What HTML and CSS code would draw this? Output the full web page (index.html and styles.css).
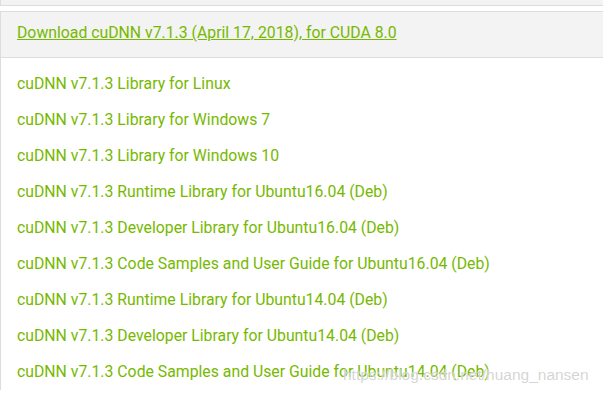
FILE: index.html
```html
<!DOCTYPE html>
<html>
<head>
  <meta charset="utf-8" />
  <title>cuDNN Download</title>
<link rel="stylesheet" href="styles.css">
</head>
<body>
<div class="page">
  <div class="prev_panel"></div>
  <div class="panel">
    <div class="panel_head">
      <a href="#">Download cuDNN v7.1.3 (April 17, 2018), for CUDA 8.0</a>
    </div>
    <div class="panel_body">
      <a href="#">cuDNN v7.1.3 Library for Linux</a>
      <a href="#">cuDNN v7.1.3 Library for Windows 7</a>
      <a href="#">cuDNN v7.1.3 Library for Windows 10</a>
      <a href="#">cuDNN v7.1.3 Runtime Library for Ubuntu16.04 (Deb)</a>
      <a href="#">cuDNN v7.1.3 Developer Library for Ubuntu16.04 (Deb)</a>
      <a href="#">cuDNN v7.1.3 Code Samples and User Guide for Ubuntu16.04 (Deb)</a>
      <a href="#">cuDNN v7.1.3 Runtime Library for Ubuntu14.04 (Deb)</a>
      <a href="#">cuDNN v7.1.3 Developer Library for Ubuntu14.04 (Deb)</a>
      <a href="#">cuDNN v7.1.3 Code Samples and User Guide for Ubuntu14.04 (Deb)</a>
    </div>
  </div>
  <div class="watermark">https://blog.csdn.net/huang_nansen</div>
</div>
</body>
</html>
```
FILE: styles.css
```css
* {
  margin: 0;
  padding: 0;
  box-sizing: border-box;
  font-family: "Roboto", sans-serif;
}
:root {
  --green-color: #76b900;
  --border-color: #dddddd;
  --head-bg: #f3f3f3;
}
body {
  background: #ffffff;
  width: 603px;
  height: 395px;
  overflow: hidden;
}
div.page {
  position: relative;
  height: 395px;
}
div.prev_panel {
  height: 6px;
  background: var(--head-bg);
  border-bottom: 1px solid var(--border-color);
  border-left: 1px solid var(--border-color);
}
div.panel {
  margin-top: 5px;
  margin-right: -10px;
  border: 1px solid var(--border-color);
  border-bottom: none;
}
div.panel_head {
  height: 46px;
  background: var(--head-bg);
  border-bottom: 1px solid var(--border-color);
  padding: 11px 0 0 16px;
}
div.panel_head a {
  font-size: 15.8px;
  color: var(--green-color);
  text-decoration: underline;
}
div.panel_body {
  padding: 8px 0 0 16px;
  display: flex;
  flex-direction: column;
}
div.panel_body a {
  display: block;
  font-size: 15.8px;
  line-height: 36px;
  color: var(--green-color);
  text-decoration: none;
}
div.watermark {
  position: absolute;
  left: 343px;
  top: 366px;
  font-family: "Liberation Sans", sans-serif;
  font-size: 15.5px;
  color: rgba(195, 195, 195, 0.7);
  text-shadow: 0 0 1px #fff;
}
```
